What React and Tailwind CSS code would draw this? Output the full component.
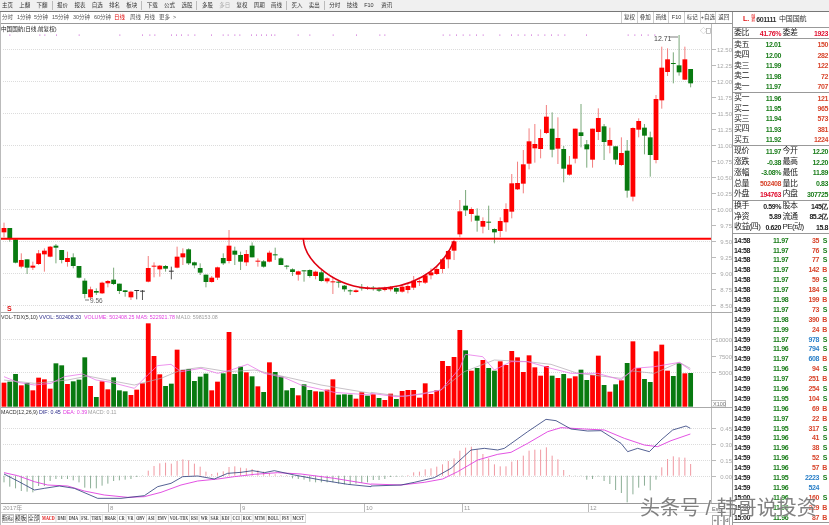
import React from "react";

const R = "#ff0000";
const G = "#087a10";

// candle data: [colour, bodyTop, bodyBottom, wickTop, wickBottom] in crop units
const a = [
["r",84,97,68,112],["g",84,115,84,125],["g",118,188,115,190],["r",180,200,160,205],["g",178,203,178,222],["r",197,203,185,210],["r",160,192,150,195],["r",152,163,145,215],["r",140,170,138,172],["g",137,143,132,190],["g",150,180,150,190],["r",174,186,155,200],["g",172,198,160,205],["g",198,233,198,235],["g",242,282,235,295],["r",268,292,260,300],["g",273,278,265,285],["r",248,280,245,282],["r",243,250,240,262],["g",239,252,203,255],["g",251,273,251,282],["g",271,276,270,290],["r",275,292,272,300],["k",270,271,270,298],["k",272,273,270,300],["r",204,245,168,247],["r",197,200,187,232],["r",197,208,195,230],["g",198,206,195,215],["k",212,213,200,238],["r",170,203,140,205],["r",160,172,145,195],["g",148,190,145,195],["g",187,196,185,205],["g",204,218,190,225],["g",224,246,224,262],["r",233,246,228,248],["r",202,233,200,240],["g",174,190,160,195],["r",137,183,90,190],["g",152,164,140,195],["g",165,185,155,210],
["r",162,187,150,198],["g",137,172,127,172],["r",182,184,175,200],["g",184,200,180,203],["r",158,185,152,187],["g",163,165,143,180],["g",175,195,172,195],["g",197,200,195,208],["g",208,216,205,228],["r",214,224,212,242],["g",211,213,211,245],["g",210,228,208,233],["r",215,228,212,238],["g",217,243,210,245],["r",235,244,232,250],["r",244,246,232,282],["g",245,247,240,263],["g",257,268,255,275],["g",271,274,268,285],["r",271,276,268,278],["g",262,265,252,272],["r",263,266,258,270],["g",263,266,258,272],["g",268,272,262,276],["r",266,270,260,274],["r",262,268,258,274],["g",264,275,262,282],["r",260,275,255,278],["r",258,270,250,280],["r",242,263,228,270],["r",243,247,238,258],["r",226,248,222,252],["r",217,226,205,238],["r",207,222,200,225],["r",178,207,174,220],["r",153,178,150,205],["r",124,152,118,180],["r",34,103,0,112],
];
const b = [
["g",527,541,480,558],["r",537,552,532,575],["g",557,572,535,605],["r",573,590,562,610],["g",575,577,527,600],["g",597,607,595,640],["r",573,603,562,622],["r",537,577,520,605],["r",460,545,432,565],["r",459,478,395,480],["r",403,461,360,490],["r",334,401,295,418],["r",342,355,282,398],["r",324,357,298,385],["r",260,309,225,312],["g",296,359,247,382],["r",324,356,262,402],["g",357,416,348,457],["r",404,434,378,437],["r",296,386,296,400],["g",307,318,222,352],["g",343,358,330,413],["r",296,389,296,413],["r",264,306,235,330],["g",289,336,282,390],["r",330,347,293,370],["g",349,389,349,403],["r",369,405,322,408],["g",362,482,330,503],["r",294,500,292,514],["r",273,299,265,322],["g",293,317,282,373],["g",322,375,305,440],["r",207,390,195,400],["r",113,211,50,236],["r",88,126,55,138],["g",99,101,67,160],["g",106,127,15,137],["r",88,149,50,150],["g",117,160,117,172],
];
const candles = [
  ...a.map(([c, t, d, h, l]) => [c, 200 + t / 3, 200 + d / 3, 200 + h / 3, 200 + l / 3]),
  ...b.map(([c, t, d, h, l]) => [c, 30 + t / 3, 30 + d / 3, 30 + h / 3, 30 + l / 3]),
];
const cx = (i) => 3 + 5.77 * i;

const vols = "r233 g230 g207 r241 g234 r256 r218 r223 r251 g175 g181 r237 g229 g224 g157 r243 g276 r229 r253 g217 g256 g259 r270 r254 r235 r55 r153 r208 g243 g236 r134 r195 g192 g228 g215 g206 r256 r230 g205 r81 g207 g185 r202 g214 r244 g261 r172 g201 g215 g256 g249 r271 g238 g255 r259 g260 r254 r223 g269 g268 g269 r281 r262 g272 r268 g279 r285 r266 g282 r258 r255 r255 r278 r235 r267 r256 r168 r183 r156 r75 g136 r197 g189 r165 g189 g197 r169 r180 r138 r157 r201 r151 r187 r212 r183 g212 r219 g207 r220 r214 g194 g225 r210 r152 g240 r260 g238 r226 g174 r109 r189 g222 g231 r139 r119 r197 g213 g175 r205 g204".split(" ");

const hist = [232,245,250,258,260,262,243,243,228,222,222,222,226,232,248,250,250,242,236,228,226,224,222,216,213,197,183,175,173,176,168,163,166,176,185,200,207,203,199,186,184,188,190,192,196,200,205,208,210,210,220,222,224,230,232,232,232,232,236,238,238,236,234,232,225,225,222,216,215,214,210,202,200,193,190,185,178,168,160,137,128,125,133,147,160,178,184,184,170,165,152,137,134,134,127,152,163,195,210,213,213,224,222,214,228,237,255,264,292,268,248,242,256,224,187,162,154,157,158,177];

const pts = (left, right, off, base) =>
  [...left.map(([x, y]) => `${x / 3},${base + y / 3}`), ...right.map(([x, y]) => `${off + x / 3},${base + y / 3}`)].join(" ");

const ma5 = pts(
  [[9,215],[50,232],[100,240],[150,235],[190,215],[245,207],[285,225],[330,232],[400,250],[440,210],[470,182],[510,178],[540,200],[600,190],[650,205],[690,195],[740,178],[790,205],[850,218],[900,240],[1000,262],[1110,270]],
  [[0,265],[75,275],[150,268],[210,255],[266,190],[283,148],[335,155],[370,195],[420,170],[470,170],[540,190],[600,205],[680,205],[750,225],[790,190],[850,185],[925,172],[958,195]],
  370, 305);
const ma10 = pts(
  [[9,225],[100,235],[200,225],[260,213],[320,225],[400,240],[480,220],[540,195],[600,187],[680,200],[760,195],[850,215],[960,240],[1110,265]],
  [[0,262],[100,275],[210,255],[280,200],[370,165],[470,170],[540,178],[620,205],[750,220],[785,198],[850,205],[925,172],[958,190]],
  370, 305);
const dif = pts(
  [[9,207],[50,228],[100,255],[130,250],[175,243],[220,250],[290,280],[360,280],[430,272],[470,245],[510,235],[545,215],[590,213],[640,222],[680,205],[720,202],[755,197],[790,203],[820,197],[880,210],[960,225],[1040,238],[1110,245]],
  [[0,243],[90,240],[130,232],[190,218],[240,190],[300,135],[340,130],[380,135],[400,130],[470,80],[525,43],[555,47],[600,72],[650,78],[690,77],[750,115],[770,140],[800,130],[835,140],[870,105],[905,75],[945,63],[958,70]],
  370, 405);
const dea = pts(
  [[9,203],[50,212],[100,230],[140,240],[200,243],[250,258],[310,270],[380,277],[430,275],[480,262],[540,240],[590,228],[650,222],[700,215],[760,208],[830,203],[900,207],[1000,220],[1110,238]],
  [[0,237],[90,240],[160,232],[215,222],[260,200],[320,165],[380,148],[420,142],[470,115],[530,80],[570,68],[640,72],[700,75],[760,100],[820,120],[860,125],[900,107],[958,87]],
  370, 405);

const dotsL = [25,115,130,165,233,355,423,445,460,510,525,540,560,580,630,665,680,700,715,750,765,780,795,810,820,890,925,995,1065,1135,1150].map((z) => z / 3);
const dotsR = [125,145,165,185,205,225,245,295,330,350,370,390,410,430,450,470,490,555,680,700,720,740,760].map((z) => 400 + z / 3);

const priceTicks = [
  ["12.50",49],["12.25",65],["12.00",81],["11.75",97],["11.50",113],["11.25",129],["11.00",145],["10.75",161],["10.50",177],["10.25",193],["10.00",209],["9.75",225],["9.50",241],["9.25",257],["9.00",273],["8.75",289],["8.50",305],
];

function Axis({ ticks }) {
  return ticks.map(([t, y]) => (
    <g key={t}>
      <line x1="711" x2="715" y1={y + 0.5} y2={y + 0.5} stroke="#bbb" />
      <text x="731" y={y + 2.5} textAnchor="end" fontSize="6" fill="#a8a8a8">{t}</text>
    </g>
  ));
}

function Grid({ ys }) {
  return ys.map((y) => (
    <line key={y} x1="2" x2="710" y1={y + 0.5} y2={y + 0.5} stroke="#dcdcdc" strokeDasharray="1 1" />
  ));
}

function PriceChart() {
  return (
    <svg className="block w-[733px] h-[288px]" viewBox="0 24 733 288">
      <Grid ys={[49,81,113,145,177,209,241,273,305]} />
      {[...dotsL, ...dotsR].map((x, i) => (
        <rect key={i} x={x} y="34.5" width="1" height="1.2" fill="#d070d8" />
      ))}
      {candles.map(([c, t, d, h, l], i) => {
        const x = cx(i);
        const col = c === "r" ? R : c === "g" ? G : "#333";
        const wick = c === "r" ? "#f07070" : c === "g" ? "#6a9e6a" : "#444";
        return (
          <g key={i}>
            <line x1={x} x2={x} y1={h} y2={l} stroke={wick} strokeWidth="0.9" />
            <rect x={x - 2.4} y={t} width="4.8" height={Math.max(d - t, 1)} fill={col} />
          </g>
        );
      })}
      <line x1="0" x2="711" y1="238.8" y2="238.8" stroke={R} strokeWidth="2" />
      <path d="M302.3 239 C304 262 335 288 372 288.5 C410 289 440 272 453 241" fill="none" stroke="#e00010" strokeWidth="1.6" />
      <line x1="84" x2="88" y1="300" y2="300" stroke="#444" strokeWidth="0.7" />
      <text x="89" y="302.5" fontSize="6.5" fill="#666">9.56</text>
      <text x="653" y="40.5" fontSize="7" fill="#444">12.71</text>
      <line x1="669" x2="677" y1="37" y2="37" stroke="#444" strokeWidth="0.7" />
      <text x="6" y="311" fontSize="7" fontWeight="700" fill="#e01010">S</text>
      <text x="699" y="33" fontSize="7" fill="#999">◇</text>
      <rect x="705.5" y="28.5" width="4" height="5" fill="none" stroke="#aaa" strokeWidth="0.7" />
      <line x1="710.5" x2="710.5" y1="24" y2="312" stroke="#bbb" />
      <Axis ticks={priceTicks} />
    </svg>
  );
}

function VolumeChart() {
  return (
    <svg className="block w-[733px] h-[94px]" viewBox="0 313 733 94">
      <Grid ys={[339,372]} />
      {vols.map((v, i) => {
        const top = 305 + Number(v.slice(1)) / 3;
        return <rect key={i} x={cx(i) - 2.4} y={top} width="4.8" height={406.7 - top} fill={v[0] === "r" ? R : G} />;
      })}
      <polyline points={ma10} fill="none" stroke="#b0a8b0" strokeWidth="0.7" />
      <polyline points={ma5} fill="none" stroke="#e878e8" strokeWidth="0.8" />
      <line x1="710.5" x2="710.5" y1="313" y2="407" stroke="#bbb" />
      <Axis ticks={[["10000",339],["7500",356],["5000",372]]} />
      <rect x="710.5" y="400.5" width="14" height="6.5" fill="#fff" stroke="#aaa" strokeWidth="0.7" />
      <text x="712" y="406" fontSize="5.5" fill="#777">X100</text>
    </svg>
  );
}

function MacdChart() {
  return (
    <svg className="block w-[733px] h-[95px]" viewBox="0 408 733 95">
      <Grid ys={[428,444,460,476]} />
      {hist.map((z, i) => {
        const y = 405 + z / 3;
        return <line key={i} x1={cx(i)} x2={cx(i)} y1="475.7" y2={y} stroke={z > 212 ? "#7fa58a" : "#ee8c96"} strokeWidth="0.9" />;
      })}
      <polyline points={dea} fill="none" stroke="#e040e0" strokeWidth="0.9" />
      <polyline points={dif} fill="none" stroke="#2a3a78" strokeWidth="0.8" />
      <line x1="710.5" x2="710.5" y1="408" y2="503" stroke="#bbb" />
      <Axis ticks={[["0.45",428],["0.30",444],["0.15",460],["0.00",476]]} />
    </svg>
  );
}

const toolbarGroups = [
  ["主页", "上翻", "下翻"],
  ["报价", "报表", "自选", "排名", "板块"],
  ["下载", "公式", "选股"],
  ["多股", "多日", "复权", "周期", "画线"],
  ["买入", "卖出"],
  ["分时", "技线", "F10", "资讯"],
];

function Toolbar() {
  return (
    <div className="h-[12px] shrink-0 flex items-center pl-[2px] bg-[#f0f0f0] border-b border-[#777] text-[5.5px] text-[#333]">
      {toolbarGroups.map((g, i) => (
        <div key={i} className={`flex items-center gap-[7.3px] pr-[5px] mr-[4.5px] ${i < 5 ? "border-r border-[#bbb]" : ""}`}>
          {g.map((t) => (
            <span key={t} className={`w-[10px] text-center whitespace-nowrap ${t === "多日" ? "text-[#aaa]" : ""}`}>{t}</span>
          ))}
        </div>
      ))}
    </div>
  );
}

function Timeframes() {
  const items = [["分时",15],["1分钟",17],["5分钟",18],["15分钟",21],["30分钟",21],["60分钟",20],["日线",16],["周线",14],["月线",15],["更多",14],[">",8]];
  const right = ["复权","叠加","画线","F10","标记","+自选","返回"];
  return (
    <div className="h-[12px] shrink-0 flex items-stretch justify-between border-b border-[#999] text-[5.5px] text-[#555]">
      <div className="flex items-center pl-[1px]">
        {items.map(([t, w]) => (
          <span key={t} style={{ width: w }} className={`whitespace-nowrap ${t === "日线" ? "text-[#e01010]" : ""}`}>{t}</span>
        ))}
      </div>
      <div className="flex items-stretch pr-[1px] text-[#333] text-[5.5px]">
        {right.map((t) => (
          <span key={t} className="w-[15.7px] flex items-center justify-center border-l border-[#ccc] whitespace-nowrap">{t}</span>
        ))}
      </div>
    </div>
  );
}

const tabs = ["MACD","DMI","DMA","FSL","TRIX","BRAR","CR","VR","OBV","ASI","EMV","VOL-TDX","RSI","WR","SAR","KDJ","CCI","ROC","MTM","BOLL","PSY","MCST"];

function BottomTabs() {
  return (
    <div className="h-[12px] shrink-0 flex items-start pl-[0.5px] pt-[0.5px]">
      {["指标","模板","全部"].map((t) => (
        <span key={t} className="w-[12.5px] h-[9px] mr-[0.5px] flex items-center justify-center border border-[#bbb] text-[5.5px] text-[#222] whitespace-nowrap">{t}</span>
      ))}
      <div className="flex h-[9px] items-stretch origin-left scale-x-[0.73] text-[5.5px] font-bold text-[#444] font-['Liberation_Serif','Noto_Sans_CJK_SC',serif]">
        {tabs.map((t) => (
          <span key={t} className={`px-[1.5px] flex items-center border-r border-y border-[#ccc] whitespace-nowrap ${t === "MACD" ? "text-[#e01010]" : ""}`}>{t}</span>
        ))}
      </div>
    </div>
  );
}

function XAxis() {
  const marks = [["8",107],["9",239],["10",363],["11",461],["12",587]];
  return (
    <div className="relative h-[9px] shrink-0 border-b border-[#ddd] text-[6px] text-[#999]">
      <span className="absolute left-[2px] top-0">2017年</span>
      {marks.map(([t, x]) => (
        <span key={t} style={{ left: x }} className="absolute top-0 pl-[1px] border-l border-[#bbb] h-[8px] leading-[9px]">{t}</span>
      ))}
      <span className="absolute left-[711px] top-[1px] text-[5.5px] text-[#666]">Esc</span>
    </div>
  );
}

const num = "font-bold text-[7px] tracking-[-0.4px] font-['Liberation_Sans',sans-serif] leading-none";
const lab = "text-[8px] tracking-[-0.6px] text-[#222] leading-none whitespace-nowrap";
const RED = "text-[#d8452c]";
const GRN = "text-[#1a7d1a]";
const BLU = "text-[#2c80c8]";
const BLK = "text-[#222]";

function Book({ rows, h }) {
  return (
    <div className="border-b border-[#999] flex flex-col">
      {rows.map(([l, p, v]) => (
        <div key={l} style={{ height: h }} className="flex items-center pl-[1px] pr-[1px]">
          <span className={`${lab} w-[30px]`}>{l}</span>
          <span className={`${num} ${GRN} w-[17px] text-right`}>{p}</span>
          <span className={`${num} ${RED} flex-1 text-right`}>{v}</span>
        </div>
      ))}
    </div>
  );
}

function Stats({ rows, h }) {
  return (
    <div className="border-b border-[#999] flex flex-col">
      {rows.map(([l, v, vc, l2, v2, vc2]) => (
        <div key={l} style={{ height: h }} className="flex items-center pl-[1px] pr-[1px]">
          <span className={`${lab} w-[16px]`}>{l}</span>
          <span className={`${num} ${vc} w-[31px] text-right whitespace-nowrap`}>{v}</span>
          <span className={`${lab} ml-[1.5px] w-[16px]`}>{l2}</span>
          <span className={`${num} ${vc2} flex-1 text-right whitespace-nowrap`}>{v2}</span>
        </div>
      ))}
    </div>
  );
}

const trades = [
  ["14:58","11.97","35","S"],["14:58","11.97","76","S"],["14:58","11.97","77","S"],["14:58","11.97","142","B"],["14:58","11.97","59","S"],["14:58","11.97","184","S"],["14:58","11.98","199","B"],
  ["14:59","11.97","73","S"],["14:59","11.98","390","B"],["14:59","11.99","24","B"],["14:59","11.97","978","S",1],["14:59","11.96","794","S",1],["14:59","11.97","608","B",1],["14:59","11.96","94","S"],
  ["14:59","11.97","251","B"],["14:59","11.96","254","S"],["14:59","11.95","104","S"],["14:59","11.96","69","B"],["14:59","11.97","22","B"],["14:59","11.95","317","S"],["14:59","11.96","41","S"],
  ["14:59","11.96","38","S"],["14:59","11.96","52","S"],["14:59","11.96","57","B"],["14:59","11.95","2223","S",1],["14:59","11.96","524","",1],["15:00","11.96","160","S"],["15:00","11.96","229","B"],["15:00","11.96","87","B"],
];

function SidePanel() {
  return (
    <div className="w-[97px] shrink-0 border-l border-[#999] flex flex-col">
      <div className="h-[16px] flex items-center border-b border-[#999] pl-[10px] text-[7px] text-[#333]">
        <span className="text-[#e01010] text-[7px] font-bold mr-[2px]">L.</span>
        <span className="flex flex-col text-[4px] leading-[4px] text-[#e01010] mr-[1px]"><span>融</span><span>券</span></span>
        <span className={`${num} text-[#333] mr-[3px]`}>601111</span>
        <span className="tracking-[-0.2px]">中国国航</span>
      </div>
      <Stats h="10.5px" rows={[["委比","41.76%","text-[#e01030]","委差","1923","text-[#e01030]"]]} />
      <Book h="10.5px" rows={[["卖五","12.01","150"],["卖四","12.00","282"],["卖三","11.99","122"],["卖二","11.98","72"],["卖一","11.97","707"]]} />
      <Book h="10.4px" rows={[["买一","11.96","121"],["买二","11.95","965"],["买三","11.94","573"],["买四","11.93","381"],["买五","11.92","1224"]]} />
      <Stats h="10.8px" rows={[
        ["现价","11.97",GRN,"今开","12.20",GRN],
        ["涨跌","-0.38",GRN,"最高","12.20",GRN],
        ["涨幅","-3.08%",GRN,"最低","11.89",GRN],
        ["总量","502408",RED,"量比","0.83",GRN],
        ["外盘","194763","text-[#e01030]","内盘","307725",GRN],
      ]} />
      <Stats h="10.6px" rows={[
        ["换手","0.59%",BLK,"股本","145亿",BLK],
        ["净资","5.89",BLK,"流通","85.2亿",BLK],
        ["收益(四)","0.620",BLK,"PE(动)","15.8",BLK],
      ]} />
      <div className="flex-1 mb-[2px] pt-[1.5px] flex flex-col border-b border-[#999]">
        {trades.map(([t, p, v, f, blue], i) => (
          <div key={i} className="h-[9.9px] flex items-center pl-[1px] pr-[1px]">
            <span className={`${num} ${BLK} w-[39px]`}>{t}</span>
            <span className={`${num} ${GRN} w-[17px]`}>{p}</span>
            <span className={`${num} ${blue ? BLU : RED} w-[29px] text-right`}>{v}</span>
            <span className={`${num} ${f === "S" ? GRN : RED} flex-1 text-right pr-[1px]`}>{f}</span>
          </div>
        ))}
      </div>
    </div>
  );
}

function Legend({ items }) {
  return (
    <div className="absolute left-[0px] top-[1px] flex text-[5.3px] whitespace-nowrap">
      {items.map(([t, c, w]) => (
        <span key={t} style={{ color: c, width: w }}>{t}</span>
      ))}
    </div>
  );
}

export default function App() {
  return (
    <div className="relative w-[829px] h-[525px] overflow-hidden bg-white flex flex-col blur-[0.3px] font-['Liberation_Sans','Noto_Sans_CJK_SC',sans-serif]">
      <Toolbar />
      <div className="flex flex-1 min-h-0">
        <div className="w-[732px] shrink-0 flex flex-col border-l border-[#bbb]">
          <Timeframes />
          <div className="relative h-[289px] shrink-0 border-b border-[#aaa]">
            <div className="absolute left-[0px] top-[1px] text-[5.6px] text-[#222] whitespace-nowrap">中国国航(日线,前复权)</div>
            <PriceChart />
          </div>
          <div className="relative h-[95px] shrink-0 border-b border-[#aaa]">
            <Legend items={[["VOL-TDX(5,10)","#333",38],["VVOL: 502408.20","#2a2a88",45],["VOLUME: 502408.25","#e040e0",52],["MA5: 522921.78","#e040e0",40],["MA10: 598153.08","#a0a0a0",42]]} />
            <VolumeChart />
          </div>
          <div className="relative h-[96px] shrink-0 border-b border-[#999]">
            <Legend items={[["MACD(12,26,9)","#333",38],["DIF: 0.45","#2a2a88",24],["DEA: 0.39","#e040e0",25],["MACD: 0.11","#a0a0a0",30]]} />
            <MacdChart />
          </div>
          <XAxis />
          <BottomTabs />
        </div>
        <SidePanel />
      </div>
      <div className="absolute left-[712px] top-[515px] flex text-[6px] text-[#444]">
        <span className="w-[6px] text-center border border-[#aaa]">+</span>
        <span className="w-[6px] text-center border border-[#aaa]">-</span>
        <span className="w-[6px] text-center border border-[#aaa]">d</span>
      </div>
      <div className="absolute left-[640px] top-[494px] text-[20px] leading-[28px] whitespace-nowrap text-[#6a6a6a]/85 [text-shadow:0_0_2px_#ffffff]">头条号 / 韩哥说投资</div>
    </div>
  );
}
